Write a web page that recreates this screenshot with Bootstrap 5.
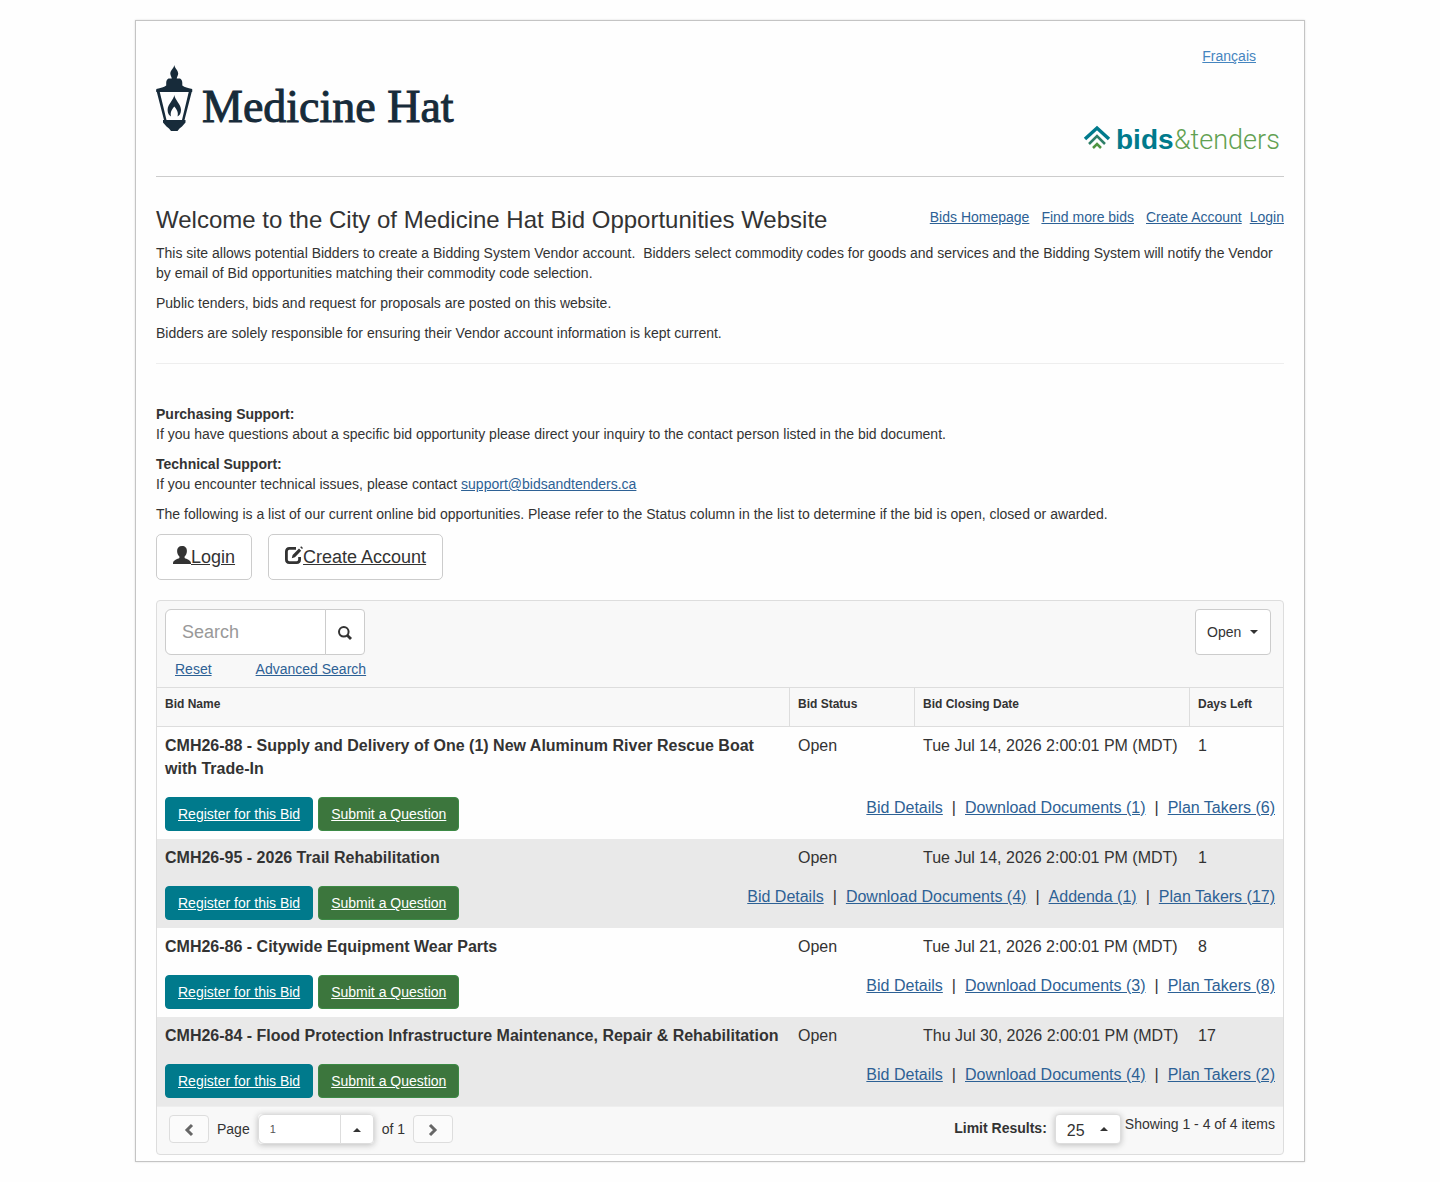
<!DOCTYPE html>
<html lang="en">
<head>
<meta charset="utf-8">
<meta name="viewport" content="width=device-width, initial-scale=1">
<title>Bid Opportunities - City of Medicine Hat</title>
<link href="https://cdn.jsdelivr.net/npm/bootstrap@5.3.0/dist/css/bootstrap.min.css" rel="stylesheet">
<style>
body{font-family:"Liberation Sans",Arial,sans-serif;font-size:14px;line-height:20px;color:#333;background:#fefefe;padding:20px 0}
a{color:#2d6195}
p{margin-bottom:10px}
.page-frame{max-width:1170px;padding:20px 20px 6px;border:1px solid #c4c4c4;box-shadow:0 0 2px #ddd;background:#fefefe}
.masthead{height:136px;border-bottom:1px solid #ccc}
.city-logo{width:302px;height:72px;margin-top:24px}
.lang-link{color:#4585bf;margin:5px 28px 0 0}
.bt-logo{width:202px;height:38px;margin-bottom:18px}
.intro{padding-top:28px}
h1{font-size:24px;line-height:30px;margin-bottom:8px}
.site-links{padding-top:2px}
.rule{margin:20px 0 40px;border-top:1px solid #eee;opacity:1}
.btn{--bs-btn-font-size:14px;--bs-btn-line-height:20px;--bs-btn-border-radius:4px;text-decoration:underline}
.btn-plain{--bs-btn-color:#333;--bs-btn-bg:#fff;--bs-btn-border-color:#ccc;--bs-btn-hover-bg:#eee}
.btn-big{--bs-btn-font-size:18px;--bs-btn-line-height:24px;--bs-btn-padding-x:16px;--bs-btn-padding-y:10px;--bs-btn-border-radius:5px}
.btn-register{--bs-btn-color:#fff;--bs-btn-bg:#007a8c;--bs-btn-border-color:#007a8c;--bs-btn-hover-bg:#006676;--bs-btn-hover-color:#fff}
.btn-question{--bs-btn-color:#fff;--bs-btn-bg:#3c763d;--bs-btn-border-color:#3c8a45;--bs-btn-hover-bg:#2f5f30;--bs-btn-hover-color:#fff}
.bid-panel{border:1px solid #ddd;border-radius:4px;background:#f8f8f8;margin-top:20px}
.tools{padding:8px 12px 8px 8px}
.search-group{width:200px}
.search-group .form-control{height:46px;font-size:18px;padding:10px 16px;border-color:#ccc;border-radius:6px 0 0 6px}
.search-group .form-control::placeholder{color:#999}
.search-group .btn{width:40px;padding:0;border-radius:0 4px 4px 0}
.search-links{padding:4px 0 0 10px;gap:44px}
.pick{position:relative;background:#fff;border:1px solid #ccc;border-radius:4px}
.pick select{appearance:none;border:0;background:transparent;color:#333;width:100%;height:100%;padding:0 0 0 11px}
.pick::after{content:"";position:absolute;right:12px;top:50%;margin-top:-2px;border:4px solid transparent;border-top-color:#333;border-bottom:0;pointer-events:none}
.pick-status{width:76px;height:46px}
.pick-limit{width:66px;height:30px;border-color:#ddd;box-shadow:0 1px 6px #bbb}
.pick-limit select{font-size:16px;padding-top:3px}
.pick-limit::after{border:4px solid transparent;border-bottom-color:#333;border-top:0}
.bids{table-layout:fixed;border-collapse:separate;border-spacing:0;width:100%;margin:0;font-size:16px;line-height:23px;background:#fefefe}
.bids th{font-size:12px;line-height:16px;height:40px;padding:8px;vertical-align:top;background:#f8f8f8;border:solid #ddd;border-width:1px 1px 1px 0}
.bids th:last-child{border-right:0}
.bids td{padding:7px 8px 9px;vertical-align:top}
.bids .bid-actions td{padding-bottom:8px}
.bids .shade{background:#e9e9e9}
.c-status{width:125px}.c-date{width:275px}.c-days{width:93px}
.row-buttons{gap:5px;padding-top:1px}
.row-links{gap:9px}
.foot{height:48px;padding:7px 8px 0 12px;border-top:1px solid #eee}
.btn-step{width:40px;height:28px;padding:0;--bs-btn-border-color:#ddd;--bs-btn-bg:#fbfbfb}
.page-group{width:116px;height:30px;border-radius:4px;box-shadow:0 1px 6px #bbb}
.page-group .form-control{font-size:11px;height:30px;padding:4px 11px;color:#555;border-color:#ddd}
.page-group .btn{width:34px;padding:0;--bs-btn-border-color:#ddd}
.caret-up{display:inline-block;border:4px solid transparent;border-bottom-color:#333;border-top:0;vertical-align:middle}
</style>
<script src="https://cdn.jsdelivr.net/npm/bootstrap@5.3.0/dist/js/bootstrap.bundle.min.js"></script>
</head>
<body>
<div class="container-fluid page-frame">
  <header class="masthead d-flex justify-content-between align-items-start">
    <svg class="city-logo" viewBox="0 0 302 72" role="img" aria-label="Medicine Hat">
      <g fill="#172b3a">
        <path d="M18.300 0c.3 3 3.900 5.500 3.900 8.500 0 2-1.200 3-1.500 5h3.300c1.500 1 2.300 2.300 2.300 4.500v2.500c2.500 1.800 5.200 2.300 9.900 3.500V27H.3v-3c4.700-1.200 7.400-1.700 9.900-3.500V18c0-2.200.8-3.500 2.300-4.500h3.300c-.3-2-1.500-3-1.500-5C14.300 5.500 18 3 18.300 0z"/>
        <path d="M.3 25h3l7.200 30H8zM36.200 25h-3L26 55h2.500z"/>
        <path d="M7 55h22.500v2.500l-3.500 4-2.500 2-2 2.500h-6.500l-2-2.500-2.500-2L7 57.500z"/>
        <path d="M18.300 30c.5 5 6.700 9 6.700 15 0 3.500-1.500 5.500-3.500 6.500.8-3 .5-5.500-3.200-10-3.700 4.500-4 7-3.200 10-2-1-3.500-3-3.500-6.500 0-6 6.200-10 6.700-15z"/>
        <text x="46" y="57" font-family="Liberation Serif, Times New Roman, serif" font-size="46" stroke="#172b3a">Medicine Hat</text>
      </g>
    </svg>
    <div class="d-flex flex-column align-items-end justify-content-between h-100">
      <a class="lang-link" href="#">Français</a>
      <svg class="bt-logo" viewBox="0 0 202 38" role="img" aria-label="bids&amp;tenders">
        <g fill="none" stroke-width="3.500">
          <path stroke="#007a8c" d="M3 19 15 8l12 11"/>
          <path stroke="#2f7f68" stroke-width="2.500" d="M7 24l8-8 8 8"/>
          <path stroke="#4f9440" stroke-width="2.500" d="M11 28l4-4 4 4"/>
        </g>
        <text x="34" y="29" font-family="Liberation Sans, Arial, sans-serif" font-weight="700" font-size="28" fill="#007a8c">bids</text>
        <text x="92" y="29" font-family="Roboto, sans-serif" font-weight="300" font-size="27" fill="#62a152">&amp;tenders</text>
      </svg>
    </div>
  </header>

  <section class="intro">
    <div class="d-flex justify-content-between align-items-start">
      <h1 class="fw-normal">Welcome to the City of Medicine Hat Bid Opportunities Website</h1>
      <nav class="site-links d-flex" aria-label="Site">
        <a class="me-2 pe-1" href="#">Bids Homepage</a>
        <a class="me-2 pe-1" href="#">Find more bids</a>
        <a class="me-2" href="#">Create Account</a>
        <a href="#">Login</a>
      </nav>
    </div>
    <p>This site allows potential Bidders to create a Bidding System Vendor account.&nbsp; Bidders select commodity codes for goods and services and the Bidding System will notify the Vendor by email of Bid opportunities matching their commodity code selection.</p>
    <p>Public tenders, bids and request for proposals are posted on this website.</p>
    <p>Bidders are solely responsible for ensuring their Vendor account information is kept current.</p>
    <hr class="rule">
    <p><b>Purchasing Support:</b><br>If you have questions about a specific bid opportunity please direct your inquiry to the contact person listed in the bid document.</p>
    <p><b>Technical Support:</b><br>If you encounter technical issues, please contact <a href="#">support@bidsandtenders.ca</a></p>
    <p>The following is a list of our current online bid opportunities. Please refer to the Status column in the list to determine if the bid is open, closed or awarded.</p>
    <div class="d-flex gap-3">
      <a class="btn btn-plain btn-big d-flex" href="#"><svg width="18" height="20" viewBox="0 0 18 20" aria-hidden="true"><path fill="#333" d="M9 1c3.200 0 5 2 4.900 5 0 2.500-1 4.300-2.300 5.500V13c2 1.200 6.100 2 6.400 5v1H0v-1c.3-3 4.400-3.800 6.400-5v-1.500C5.100 10.300 4.100 8.500 4.100 6 4 3 5.800 1 9 1z"/></svg>Login</a>
      <a class="btn btn-plain btn-big d-flex" href="#"><svg width="18" height="20" viewBox="0 0 18 20" aria-hidden="true"><path fill="none" stroke="#333" stroke-width="2.800" d="M11 3.400H4.400Q1.400 3.400 1.400 6.400v8.200q0 3 3 3h7.200q3 0 3-3V12"/><path fill="#333" d="M6.800 13.200l.8-3.200L14 3.600l2.200 2.200-6.300 6.500zM15.200 2.200l1-1 1.800 1.800-1 1z"/></svg>Create Account</a>
    </div>
  </section>

  <section class="bid-panel">
    <div class="tools d-flex justify-content-between align-items-start">
      <form>
        <div class="input-group search-group">
          <input class="form-control" type="search" placeholder="Search" aria-label="Search bids">
          <button class="btn btn-plain" type="button" aria-label="Search"><svg width="14" height="14" viewBox="0 0 14 14" aria-hidden="true"><g fill="none" stroke="#333"><circle cx="5.800" cy="5.800" r="4.800" stroke-width="2"/><path stroke-width="2.800" d="M9.200 9.200l3.800 3.800"/></g></svg></button>
        </div>
        <div class="search-links d-flex"><a href="#">Reset</a><a href="#">Advanced Search</a></div>
      </form>
      <div class="pick pick-status"><select aria-label="Bid status"><option>Open</option><option>Closed</option><option>Awarded</option></select></div>
    </div>

    <table class="bids">
      <colgroup><col><col class="c-status"><col class="c-date"><col class="c-days"></colgroup>
      <thead><tr><th scope="col">Bid Name</th><th scope="col">Bid Status</th><th scope="col">Bid Closing Date</th><th scope="col">Days Left</th></tr></thead>
      <tbody>
        <tr><td><b>CMH26-88 - Supply and Delivery of One (1) New Aluminum River Rescue Boat with Trade-In</b></td><td>Open</td><td>Tue Jul 14, 2026 2:00:01 PM (MDT)</td><td>1</td></tr>
        <tr class="bid-actions"><td colspan="4"><div class="d-flex justify-content-between align-items-start">
          <div class="row-buttons d-flex"><a class="btn btn-register" href="#">Register for this Bid</a><a class="btn btn-question" href="#">Submit a Question</a></div>
          <div class="row-links d-flex"><a href="#">Bid Details</a><span>|</span><a href="#">Download Documents (1)</a><span>|</span><a href="#">Plan Takers (6)</a></div></div></td></tr>
        <tr class="shade"><td><b>CMH26-95 - 2026 Trail Rehabilitation</b></td><td>Open</td><td>Tue Jul 14, 2026 2:00:01 PM (MDT)</td><td>1</td></tr>
        <tr class="bid-actions shade"><td colspan="4"><div class="d-flex justify-content-between align-items-start">
          <div class="row-buttons d-flex"><a class="btn btn-register" href="#">Register for this Bid</a><a class="btn btn-question" href="#">Submit a Question</a></div>
          <div class="row-links d-flex"><a href="#">Bid Details</a><span>|</span><a href="#">Download Documents (4)</a><span>|</span><a href="#">Addenda (1)</a><span>|</span><a href="#">Plan Takers (17)</a></div></div></td></tr>
        <tr><td><b>CMH26-86 - Citywide Equipment Wear Parts</b></td><td>Open</td><td>Tue Jul 21, 2026 2:00:01 PM (MDT)</td><td>8</td></tr>
        <tr class="bid-actions"><td colspan="4"><div class="d-flex justify-content-between align-items-start">
          <div class="row-buttons d-flex"><a class="btn btn-register" href="#">Register for this Bid</a><a class="btn btn-question" href="#">Submit a Question</a></div>
          <div class="row-links d-flex"><a href="#">Bid Details</a><span>|</span><a href="#">Download Documents (3)</a><span>|</span><a href="#">Plan Takers (8)</a></div></div></td></tr>
        <tr class="shade"><td><b>CMH26-84 - Flood Protection Infrastructure Maintenance, Repair &amp; Rehabilitation</b></td><td>Open</td><td>Thu Jul 30, 2026 2:00:01 PM (MDT)</td><td>17</td></tr>
        <tr class="bid-actions shade"><td colspan="4"><div class="d-flex justify-content-between align-items-start">
          <div class="row-buttons d-flex"><a class="btn btn-register" href="#">Register for this Bid</a><a class="btn btn-question" href="#">Submit a Question</a></div>
          <div class="row-links d-flex"><a href="#">Bid Details</a><span>|</span><a href="#">Download Documents (4)</a><span>|</span><a href="#">Plan Takers (2)</a></div></div></td></tr>
      </tbody>
    </table>

    <div class="foot d-flex justify-content-between align-items-start">
      <div class="d-flex align-items-center gap-2">
        <button class="btn btn-plain btn-step" type="button" aria-label="Previous page"><svg width="12" height="14" viewBox="0 0 12 14" aria-hidden="true"><path fill="none" stroke="#666" stroke-width="3" d="M9 2 4 7l5 5"/></svg></button>
        <label for="page-no">Page</label>
        <div class="input-group page-group">
          <input class="form-control" id="page-no" type="text" value="1">
          <button class="btn btn-plain" type="button" aria-label="Choose page"><span class="caret-up"></span></button>
        </div>
        <span>of 1</span>
        <button class="btn btn-plain btn-step" type="button" aria-label="Next page"><svg width="12" height="14" viewBox="0 0 12 14" aria-hidden="true"><path fill="none" stroke="#666" stroke-width="3" d="M3 2l5 5-5 5"/></svg></button>
      </div>
      <div class="d-flex align-items-start">
        <label class="fw-bold me-2 pt-1" for="limit">Limit Results:</label>
        <div class="pick pick-limit me-1"><select id="limit"><option>25</option><option>50</option><option>100</option></select></div>
        <span>Showing 1 - 4 of 4 items</span>
      </div>
    </div>
  </section>
</div>
</body>
</html>
